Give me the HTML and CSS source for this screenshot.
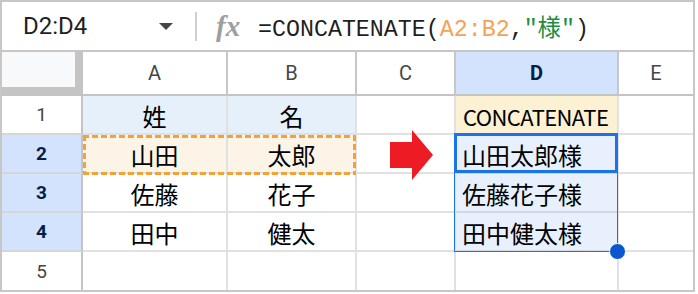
FILE: index.html
```html
<!DOCTYPE html>
<html lang="ja">
<head>
    <meta charset="UTF-8">
    <title>CONCATENATE</title>
    <link rel="stylesheet" href="styles.css">
</head>
<body>
    <div class="sheet">
        <div class="formula-bar">
            <div class="namebox">
                <span class="range-name">D2:D4</span>
                <span class="caret"></span>
            </div>
            <div class="divider"></div>
            <span class="fx">fx</span>
            <div class="formula">=CONCATENATE(<span class="ref">A2:B2</span>,<span class="str">"様"</span>)</div>
        </div>

        <div class="grid">
            <div class="corner"></div>
            <div class="col-head">A</div>
            <div class="col-head">B</div>
            <div class="col-head">C</div>
            <div class="col-head active">D</div>
            <div class="col-head last">E</div>

            <div class="row-head">1</div>
            <div class="cell center head-fill">姓</div>
            <div class="cell center head-fill">名</div>
            <div class="cell"></div>
            <div class="cell title-fill">CONCATENATE</div>
            <div class="cell last"></div>

            <div class="row-head active">2</div>
            <div class="cell center copy-fill">山田</div>
            <div class="cell center copy-fill">太郎</div>
            <div class="cell"></div>
            <div class="cell sel">山田太郎様</div>
            <div class="cell last"></div>

            <div class="row-head active">3</div>
            <div class="cell center">佐藤</div>
            <div class="cell center">花子</div>
            <div class="cell"></div>
            <div class="cell sel">佐藤花子様</div>
            <div class="cell last"></div>

            <div class="row-head active">4</div>
            <div class="cell center">田中</div>
            <div class="cell center">健太</div>
            <div class="cell"></div>
            <div class="cell sel">田中健太様</div>
            <div class="cell last"></div>

            <div class="row-head bottom">5</div>
            <div class="cell bottom"></div>
            <div class="cell bottom"></div>
            <div class="cell bottom"></div>
            <div class="cell bottom"></div>
            <div class="cell bottom last"></div>

            <!-- overlays -->
            <div class="copy-box"></div>
            <svg class="arrow" width="43" height="50" viewBox="0 0 43 50">
                <polygon points="0,12 22,12 22,0 43,25 22,50 22,38 0,38" fill="#ed1c24"/>
            </svg>
            <div class="range-box"><span class="handle"></span></div>
            <div class="active-box"></div>
        </div>
    </div>
</body>
</html>
```

FILE: styles.css
```css
*{
    margin: 0;
    padding: 0;
    box-sizing: border-box;
}
body{
    background: #fff;
    font-family: Roboto, "Noto Sans CJK JP", sans-serif;
    color: #1f1f1f;
}
.sheet{
    width: 695px;
    height: 292px;
    border: 2px solid #c7c7c7;
    display: flex;
    flex-direction: column;
}

/* formula bar */
.formula-bar{
    height: 50px;
    flex-shrink: 0;
    border-bottom: 2px solid #c7c7c7;
    display: flex;
    align-items: center;
}
.namebox{
    width: 193px;
    display: flex;
    align-items: center;
    padding-left: 21px;
    padding-right: 22px;
}
.range-name{
    font-size: 24px;
    color: #1f1f1f;
}
.caret{
    margin-left: auto;
    width: 0;
    height: 0;
    border-left: 7px solid transparent;
    border-right: 7px solid transparent;
    border-top: 7px solid #444746;
}
.divider{
    width: 2px;
    height: 29px;
    background: #d0d0d0;
}
.fx{
    width: 28px;
    margin-left: 19px;
    font-family: "Liberation Serif", serif;
    font-style: italic;
    font-weight: bold;
    font-size: 29px;
    line-height: 1;
    color: #9e9e9e;
}
.formula{
    margin-left: 14px;
    font-family: "Liberation Mono", "Noto Sans CJK JP", monospace;
    font-size: 23.3px;
    color: #1f1f1f;
}
.ref{
    color: #f6a15a;
}
.str{
    color: #1e8e3e;
}

/* grid */
.grid{
    flex: 1;
    position: relative;
    display: grid;
    grid-template-columns: 81px 145px 129px 99px 163px 1fr;
    grid-template-rows: 44px repeat(4, 39px) 1fr;
}
.corner{
    background: #f8f9fa;
    border-right: 8px solid #c4c4c4;
    border-bottom: 9px solid #c4c4c4;
}
.col-head{
    display: flex;
    align-items: center;
    justify-content: center;
    font-size: 20px;
    color: #444746;
    border-right: 2px solid #c7c7c7;
    border-bottom: 2px solid #c4c4c4;
}
.col-head.active{
    background: #d3e3fd;
    color: #041e49;
    font-weight: bold;
}
.col-head.last{
    border-right: none;
}
.row-head{
    display: flex;
    align-items: center;
    justify-content: center;
    font-size: 19px;
    color: #444746;
    border-right: 2px solid #c4c4c4;
    border-bottom: 2px solid #d6d6d6;
}
.row-head.active{
    background: #d3e3fd;
    color: #041e49;
    font-weight: bold;
}
.row-head.bottom,
.cell.bottom{
    border-bottom: none;
}
.cell{
    display: flex;
    align-items: center;
    padding: 2px 6px 0;
    font-family: "Noto Sans CJK JP", sans-serif;
    font-size: 24px;
    color: #000;
    white-space: nowrap;
    border-right: 2px solid #e1e1e1;
    border-bottom: 2px solid #e1e1e1;
}
.cell.center{
    justify-content: center;
}
.cell.last{
    border-right: none;
}
.head-fill{
    background: #e6f0fb;
}
.title-fill{
    background: #fdf1d3;
    font-size: 22px;
    letter-spacing: -0.6px;
    padding-left: 7px;
}
.copy-fill{
    background: #fdf4e8;
}
.sel{
    background: #e8f0fd;
    border-bottom-color: #cfd8e4;
}

/* overlays */
.copy-box{
    position: absolute;
    left: 81px;
    top: 83px;
    width: 273px;
    height: 40px;
    background:
        repeating-linear-gradient(90deg, #f4a236 0 6px, transparent 6px 9px) left top / 100% 3px no-repeat,
        repeating-linear-gradient(90deg, #f4a236 0 6px, transparent 6px 9px) left bottom / 100% 3px no-repeat,
        repeating-linear-gradient(180deg, #f4a236 0 6px, transparent 6px 9px) left top / 3px 100% no-repeat,
        repeating-linear-gradient(180deg, #f4a236 0 6px, transparent 6px 9px) right top / 3px 100% no-repeat;
}
.arrow{
    position: absolute;
    left: 388px;
    top: 78px;
}
.range-box{
    position: absolute;
    left: 452px;
    top: 82px;
    width: 164px;
    height: 118px;
    border: 1px solid #1a73e8;
}
.handle{
    position: absolute;
    right: -9px;
    bottom: -9px;
    width: 17px;
    height: 17px;
    border-radius: 50%;
    background: #0b57d0;
    border: 1px solid #fff;
}
.active-box{
    position: absolute;
    left: 452px;
    top: 81px;
    width: 164px;
    height: 40px;
    border: 3px solid #1a73e8;
}
```
